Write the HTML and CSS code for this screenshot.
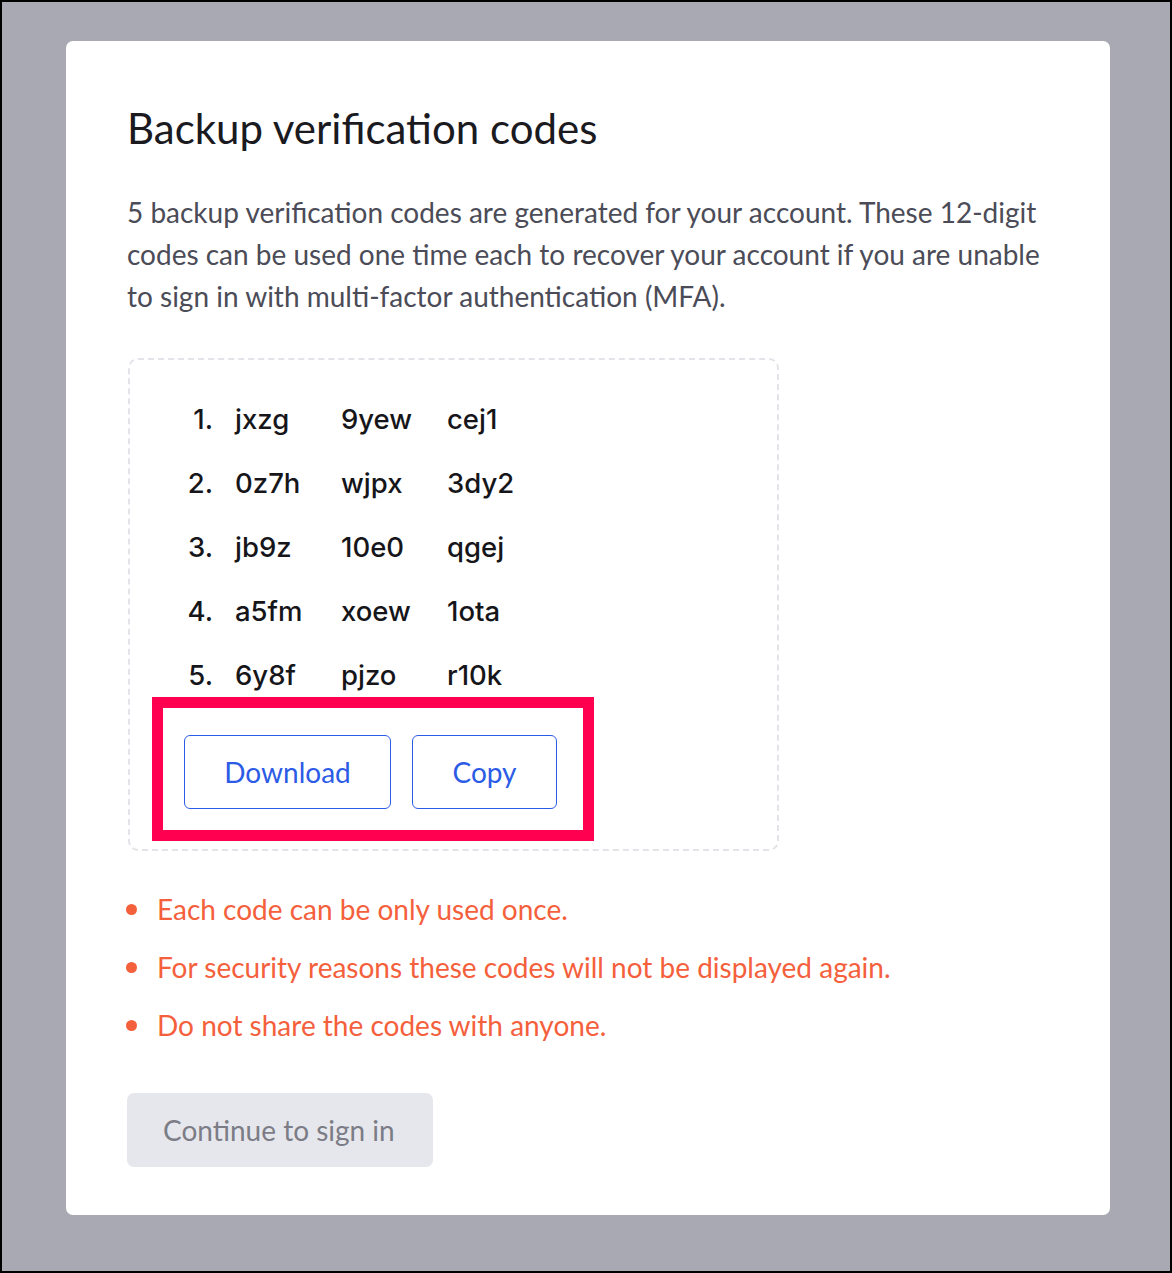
FILE: index.html
```html
<!DOCTYPE html>
<html>
<head>
<meta charset="utf-8">
<link rel="stylesheet" href="styles.css">
</head>
<body>
<div class="frame">
  <div class="card">
    <h1 class="title">Backup verification codes</h1>
    <p class="intro">5 backup verification codes are generated for your account. These 12-digit codes can be used one time each to recover your account if you are unable to sign in with multi-factor authentication (MFA).</p>
    <div class="codebox">
      <ol class="codes">
        <li class="row"><span class="num">1.</span><span class="c">jxzg</span><span class="c">9yew</span><span class="c">cej1</span></li>
        <li class="row"><span class="num">2.</span><span class="c">0z7h</span><span class="c">wjpx</span><span class="c">3dy2</span></li>
        <li class="row"><span class="num">3.</span><span class="c">jb9z</span><span class="c">10e0</span><span class="c">qgej</span></li>
        <li class="row"><span class="num">4.</span><span class="c">a5fm</span><span class="c">xoew</span><span class="c">1ota</span></li>
        <li class="row"><span class="num">5.</span><span class="c">6y8f</span><span class="c">pjzo</span><span class="c">r10k</span></li>
      </ol>
      <div class="actions">
        <button class="btn-outline btn-download">Download</button>
        <button class="btn-outline btn-copy">Copy</button>
        <div class="highlight"></div>
      </div>
    </div>
    <ul class="notes">
      <li>Each code can be only used once.</li>
      <li>For security reasons these codes will not be displayed again.</li>
      <li>Do not share the codes with anyone.</li>
    </ul>
    <button class="btn-continue">Continue to sign in</button>
  </div>
</div>
</body>
</html>
```

FILE: styles.css
```css
html, body {
  margin: 0;
  padding: 0;
}
body {
  width: 1172px;
  height: 1273px;
  overflow: hidden;
  font-family: Lato, "Liberation Sans", sans-serif;
}
.frame {
  box-sizing: border-box;
  width: 1172px;
  height: 1273px;
  border: 2px solid #000;
  background: #a9a9b3;
  padding: 39px 60px 0 64px;
}
.card {
  box-sizing: border-box;
  width: 1044px;
  height: 1174px;
  background: #fff;
  border-radius: 7px;
  padding: 0 61px;
  display: flex;
  flex-direction: column;
  align-items: flex-start;
}
.title {
  margin: 62px 0 0 0;
  font-weight: 400;
  font-size: 42px;
  line-height: 50px;
  color: #1a1a1f;
}
.intro {
  margin: 38px 0 0 0;
  font-size: 28px;
  line-height: 42px;
  color: #4b4c57;
}
.codebox {
  box-sizing: border-box;
  margin-top: 41px;
  margin-left: 1px;
  width: 651px;
  border: 2px dashed #e3e3e9;
  border-radius: 10px;
  padding: 27px 0 40px 0;
}
.codes {
  list-style: none;
  margin: 0;
  padding: 0;
  font-family: Inter, "Noto Sans", sans-serif;
  font-weight: 500;
  font-size: 27.5px;
  color: #16161a;
}
.row {
  display: flex;
  height: 64px;
  align-items: center;
}
.num {
  width: 105px;
  text-align: right;
  padding-right: 22px;
  box-sizing: border-box;
}
.c {
  width: 106px;
}
.actions {
  position: relative;
  display: flex;
  gap: 21px;
  margin-top: 28px;
  margin-left: 54px;
}
.btn-outline {
  box-sizing: border-box;
  height: 74px;
  background: #fff;
  border: 1.7px solid #2c5be6;
  border-radius: 6px;
  color: #2c5be6;
  font-family: Lato, "Liberation Sans", sans-serif;
  font-size: 28px;
  padding: 0;
}
.btn-download {
  width: 207px;
}
.btn-copy {
  width: 145px;
}
.highlight {
  position: absolute;
  left: -32px;
  top: -38px;
  width: 442px;
  height: 144px;
  box-sizing: border-box;
  border: 11px solid #ff0050;
  pointer-events: none;
}
.notes {
  list-style: none;
  margin: 38px 0 0 0;
  padding: 0;
  color: #f5603c;
  font-size: 28px;
}
.notes li {
  position: relative;
  height: 58px;
  line-height: 40px;
  padding-left: 30px;
}
.notes li::before {
  content: "";
  position: absolute;
  left: -1px;
  top: 15px;
  width: 11px;
  height: 11px;
  border-radius: 50%;
  background: #f5603c;
}
.btn-continue {
  margin-top: 30px;
  box-sizing: border-box;
  width: 306px;
  height: 74px;
  border: none;
  border-radius: 7px;
  background: #e6e7ec;
  color: #7b7c86;
  font-family: Lato, "Liberation Sans", sans-serif;
  font-size: 28px;
  padding: 0 0 0 36px;
  text-align: left;
}
```
